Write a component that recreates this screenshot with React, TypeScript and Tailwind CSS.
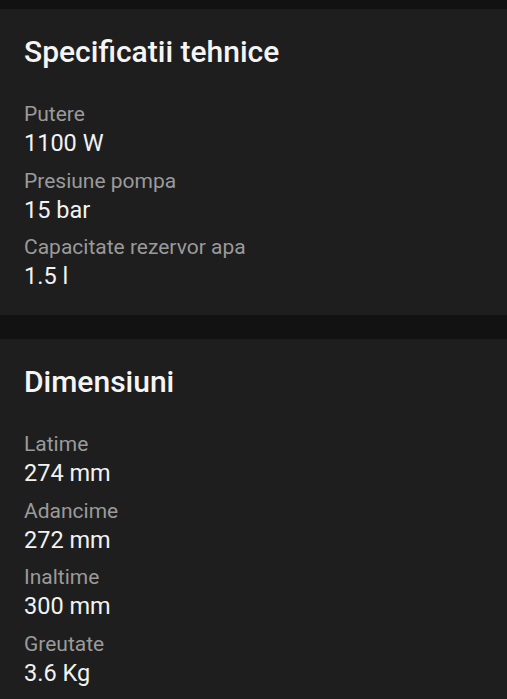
import React from "react";

type Spec = { label: string; value: string };

const sections: { title: string; items: Spec[] }[] = [
    {
        title: "Specificatii tehnice",
        items: [
            { label: "Putere", value: "1100 W" },
            { label: "Presiune pompa", value: "15 bar" },
            { label: "Capacitate rezervor apa", value: "1.5 l" },
        ],
    },
    {
        title: "Dimensiuni",
        items: [
            { label: "Latime", value: "274 mm" },
            { label: "Adancime", value: "272 mm" },
            { label: "Inaltime", value: "300 mm" },
            { label: "Greutate", value: "3.6 Kg" },
        ],
    },
];

function SpecCard({ title, items }: { title: string; items: Spec[] }) {
    return (
        <div className="bg-[#1e1e1e] px-6 pt-[25px] pb-[24px]">
            <h2 className="text-[30px] leading-[36px] font-medium text-[#f5f5f5]">{title}</h2>
            <div className="mt-[30px] flex flex-col gap-[8.5px]">
                {items.map((item) => (
                    <div key={item.label}>
                        <div className="text-[21px] leading-[28px] text-[#9a9a9a]">{item.label}</div>
                        <div className="text-[23.5px] leading-[30px] text-[#f2f2f2]">{item.value}</div>
                    </div>
                ))}
            </div>
        </div>
    );
}

export default function App() {
    return (
        <div
            className="min-h-[699px] bg-[#121212] pt-[9px] flex flex-col gap-[24px]"
            style={{ fontFamily: "Roboto, 'Noto Sans', sans-serif" }}
        >
            {sections.map((s) => (
                <SpecCard key={s.title} title={s.title} items={s.items} />
            ))}
        </div>
    );
}
